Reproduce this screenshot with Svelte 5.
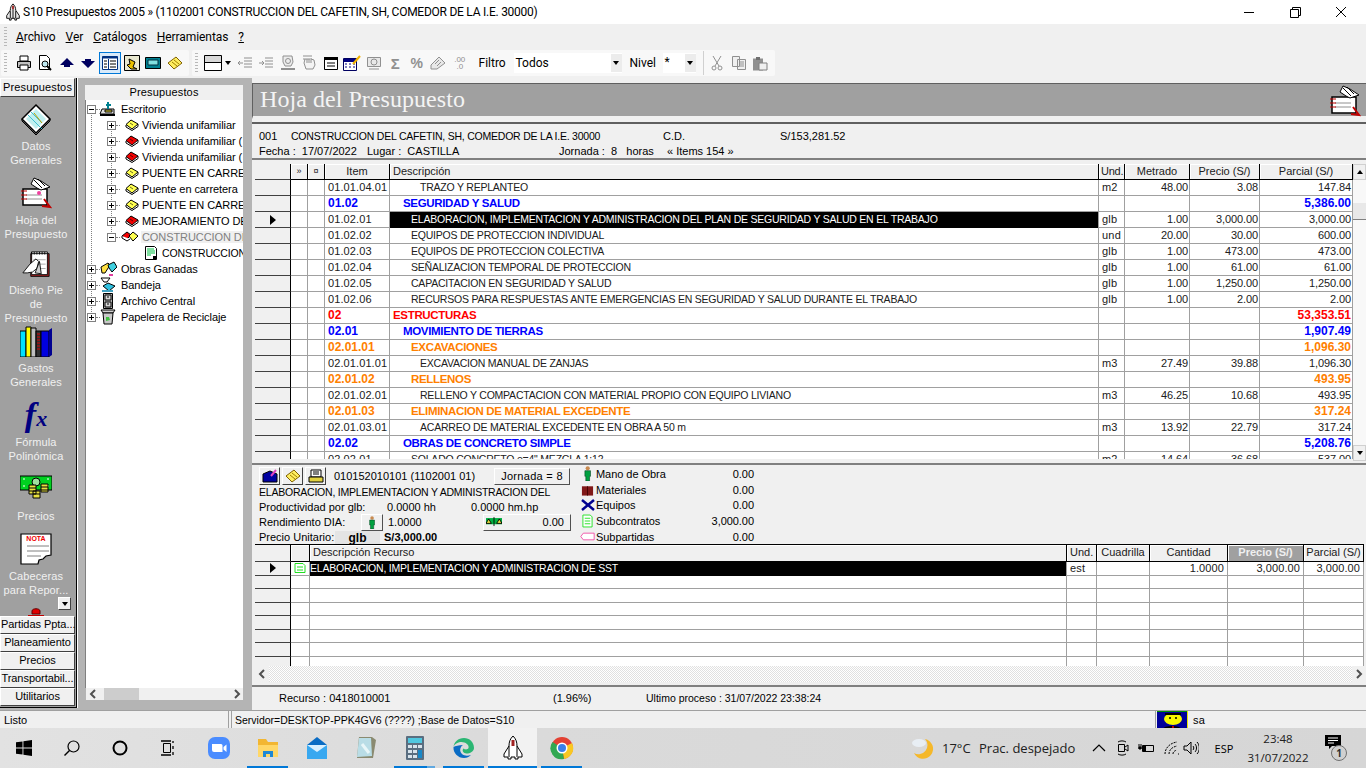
<script>
  const menus = ["Archivo", "Ver", "Catálogos", "Herramientas", "?"];

  const treeBooks = [
    { color: "yellow", text: "Vivienda unifamiliar" },
    { color: "red", text: "Vivienda unifamiliar (" },
    { color: "red", text: "Vivienda unifamiliar (" },
    { color: "yellow", text: "PUENTE EN CARRETERA" },
    { color: "yellow", text: "Puente en carretera" },
    { color: "yellow", text: "PUENTE EN CARRETERA" },
    { color: "red", text: "MEJORAMIENTO DE LA" },
  ];

  const rows = [
    { item: "01.01.04.01", desc: "TRAZO Y REPLANTEO", ind: 4, und: "m2", met: "48.00", pre: "3.08", par: "147.84" },
    { item: "01.02", desc: "SEGURIDAD Y SALUD", ind: 2, kind: "blue", par: "5,386.00" },
    { item: "01.02.01", desc: "ELABORACION, IMPLEMENTACION Y ADMINISTRACION DEL PLAN DE SEGURIDAD Y SALUD EN EL TRABAJO", ind: 3, und: "glb", met: "1.00", pre: "3,000.00", par: "3,000.00", sel: true },
    { item: "01.02.02", desc: "EQUIPOS DE PROTECCION INDIVIDUAL", ind: 3, und: "und", met: "20.00", pre: "30.00", par: "600.00" },
    { item: "01.02.03", desc: "EQUIPOS DE PROTECCION COLECTIVA", ind: 3, und: "glb", met: "1.00", pre: "473.00", par: "473.00" },
    { item: "01.02.04", desc: "SEÑALIZACION TEMPORAL DE PROTECCION", ind: 3, und: "glb", met: "1.00", pre: "61.00", par: "61.00" },
    { item: "01.02.05", desc: "CAPACITACION EN SEGURIDAD Y SALUD", ind: 3, und: "glb", met: "1.00", pre: "1,250.00", par: "1,250.00" },
    { item: "01.02.06", desc: "RECURSOS PARA RESPUESTAS ANTE EMERGENCIAS EN SEGURIDAD Y SALUD DURANTE EL TRABAJO", ind: 3, und: "glb", met: "1.00", pre: "2.00", par: "2.00" },
    { item: "02", desc: "ESTRUCTURAS", ind: 1, kind: "red", par: "53,353.51" },
    { item: "02.01", desc: "MOVIMIENTO DE TIERRAS", ind: 2, kind: "blue", par: "1,907.49" },
    { item: "02.01.01", desc: "EXCAVACIONES", ind: 3, kind: "orange", par: "1,096.30" },
    { item: "02.01.01.01", desc: "EXCAVACION MANUAL DE ZANJAS", ind: 4, und: "m3", met: "27.49", pre: "39.88", par: "1,096.30" },
    { item: "02.01.02", desc: "RELLENOS", ind: 3, kind: "orange", par: "493.95" },
    { item: "02.01.02.01", desc: "RELLENO Y COMPACTACION CON MATERIAL PROPIO CON EQUIPO LIVIANO", ind: 4, und: "m3", met: "46.25", pre: "10.68", par: "493.95" },
    { item: "02.01.03", desc: "ELIMINACION DE MATERIAL EXCEDENTE", ind: 3, kind: "orange", par: "317.24" },
    { item: "02.01.03.01", desc: "ACARREO DE MATERIAL EXCEDENTE EN OBRA A 50 m", ind: 4, und: "m3", met: "13.92", pre: "22.79", par: "317.24" },
    { item: "02.02", desc: "OBRAS DE CONCRETO SIMPLE", ind: 2, kind: "blue", par: "5,208.76" },
    { item: "02.02.01", desc: "SOLADO CONCRETO e=4\" MEZCLA 1:12", ind: 3, und: "m2", met: "14.64", pre: "36.68", par: "537.00" },
  ];

  const indents = { 1: 3, 2: 13, 3: 21, 4: 30 };

  const totals = [
    { label: "Mano de Obra", value: "0.00", icon: "man" },
    { label: "Materiales", value: "0.00", icon: "mat" },
    { label: "Equipos", value: "0.00", icon: "eq" },
    { label: "Subcontratos", value: "3,000.00", icon: "sub" },
    { label: "Subpartidas", value: "0.00", icon: "part" },
  ];

  const bottomTabs = ["Partidas Ppta...", "Planeamiento", "Precios", "Transportabil...", "Utilitarios"];
  const emptyRows = Array(7);
</script>

{#snippet book(color)}
  <svg class="book" viewBox="0 0 14 12" width="14" height="12">
    <path d="M1 6v2l6 3.500 6-4V5" fill="#fff" stroke="#000" />
    <path d="M1 5.500 6 1l7 4-6 5z" fill={color === "red" ? "#f00000" : "#ffff50"} stroke="#000" />
    <path d="M5 4l3 2" stroke="#000" stroke-width=".6" />
  </svg>
{/snippet}

{#snippet expander(minus)}
  <span class="exp">
    <span class="exp-h"></span>
    {#if !minus}<span class="exp-v"></span>{/if}
  </span>
{/snippet}

{#snippet tinyman(size)}
  <svg viewBox="0 0 10 16" width={size * 0.625} height={size}>
    <circle cx="5" cy="2.5" r="2.2" fill="#c98a50" />
    <path d="M2 5h6v6H7v5H3v-5H2z" fill="#00a040" stroke="#004020" stroke-width=".6" />
  </svg>
{/snippet}

{#snippet chevron(right)}
  <svg viewBox="0 0 8 10" width="8" height="10">
    <path d={right ? "M2 1l4 4-4 4" : "M6 1 2 5l4 4"} fill="none" stroke="#505050" stroke-width="2" />
  </svg>
{/snippet}

<div class="window">
  <header class="titlebar">
    <svg class="shuttle" viewBox="0 0 20 20" width="18" height="18">
      <path d="M10 1c2 2 3 4 3 7l4 6v3h-3v2h-2v-2H8v2H6v-2H3v-3l4-6c0-3 1-5 3-7z" fill="#e8e8e8" stroke="#000" />
      <path d="M9 3h2v4H9z" fill="#a02020" />
      <path d="M7 9v8M13 9v8M10 7v10" stroke="#000" />
    </svg>
    <span class="title-text">S10 Presupuestos 2005 » (1102001 CONSTRUCCION DEL CAFETIN, SH, COMEDOR DE LA I.E. 30000)</span>
    <div class="winctl">
      <svg viewBox="0 0 46 24" width="46" height="24"><path d="M18 12.5h10" stroke="#000" /></svg>
      <svg viewBox="0 0 46 24" width="46" height="24"><path d="M18.5 9.5h8v8h-8zM20.5 9.5v-2h8v8h-2" fill="none" stroke="#000" /></svg>
      <svg viewBox="0 0 46 24" width="46" height="24"><path d="M18 7l10 10M28 7 18 17" stroke="#000" /></svg>
    </div>
  </header>

  <nav class="menubar">
    <span class="grip"></span>
    {#each menus as m}
      <span class="menu"><u>{m[0]}</u>{m.slice(1)}</span>
    {/each}
  </nav>

  <div class="toolbar">
    <div class="band band-a">
      <span class="grip"></span>
      <span class="tb">
        <svg viewBox="0 0 16 16" width="16" height="16"><path d="M4 1h8v5H4z" fill="#fff" stroke="#000" /><path d="M1.5 6.500h13v6h-13z" fill="#c0c0c0" stroke="#000" /><path d="M4 10h8v5H4z" fill="#fff" stroke="#000" /></svg>
      </span>
      <span class="tb">
        <svg viewBox="0 0 16 16" width="16" height="16"><path d="M2.500 .5h7l3 3v11h-10z" fill="#fff" stroke="#000" /><circle cx="8" cy="9" r="3" fill="#bfe8f0" stroke="#000" /><path d="M10 11l4 4" stroke="#000" stroke-width="2" /></svg>
      </span>
      <span class="tb"><svg viewBox="0 0 14 10" width="14" height="10"><path d="M7 0l7 7H10v2H4V7H0z" fill="#000060" /></svg></span>
      <span class="tb"><svg viewBox="0 0 14 10" width="14" height="10"><path d="M7 10 0 3h4V1h6v2h4z" fill="#000060" /></svg></span>
      <span class="tb tb-on">
        <svg viewBox="0 0 16 14" width="16" height="14"><path d="M.5.500h15v13H.5z" fill="#fff" stroke="#003080" /><path d="M.5 .5h15v2H.5z" fill="#003080" /><path d="M6.500 3v10" stroke="#003080" /><path d="M2 5h3M2 8h3M2 11h3M8 5h6M8 8h6M8 11h6" stroke="#000" /></svg>
      </span>
      <span class="tb">
        <svg viewBox="0 0 16 16" width="16" height="16"><path d="M.5.500h15v15H.5z" fill="#e8e8d0" stroke="#000" /><path d="M5 4l6 3-2 5 4 2-6 0-4-4 3-1z" fill="#e8c000" stroke="#000" /></svg>
      </span>
      <span class="tb">
        <svg viewBox="0 0 16 14" width="16" height="14"><path d="M.5 1.500h15v11H.5z" fill="#008090" stroke="#000" /><path d="M3 4h10v5H3z" fill="#80e0e0" stroke="#003040" /></svg>
      </span>
      <span class="tb">
        <svg viewBox="0 0 16 14" width="16" height="14"><path d="M1 7l8-6 6 6-8 6z" fill="#ffee60" stroke="#806000" /><path d="M5 6l5 4M7 4l5 4" stroke="#a08000" /></svg>
      </span>
    </div>
    <div class="band band-b">
      <span class="grip"></span>
      <span class="tb tb-wide">
        <svg viewBox="0 0 18 16" width="18" height="16"><path d="M.5.500h17v15H.5z" fill="#fff" stroke="#000" /><path d="M1 1h16v6H1z" fill="#d8d8d8" /><path d="M.5 7.500h17" stroke="#000" /></svg>
        <i class="caret"></i>
      </span>
      <div class="tb-group">
        <span class="tb dim">
          <svg viewBox="0 0 16 14" width="16" height="14"><path d="M7 2h8M7 5h8M7 8h8M7 11h8M1 7h5M3 5 1 7l2 2" stroke="#909090" fill="none" /></svg>
        </span>
        <span class="tb dim">
          <svg viewBox="0 0 16 14" width="16" height="14"><path d="M7 2h8M7 5h8M7 8h8M7 11h8M1 7h5M4 5l2 2-2 2" stroke="#909090" fill="none" /></svg>
        </span>
        <span class="tb dim">
          <svg viewBox="0 0 16 16" width="16" height="16"><path d="M3 1h9l1 6-2 4H5L3 7z" fill="#ececec" stroke="#909090" /><circle cx="8" cy="6" r="2.500" fill="none" stroke="#909090" /><path d="M1 14h14" stroke="#909090" stroke-width="2" /></svg>
        </span>
        <span class="tb dim">
          <svg viewBox="0 0 16 16" width="16" height="16"><path d="M2 4h9M2 1h9M4 4l-1 4 2 6h7l2-4-1-5-3-1" fill="#f4f4f4" stroke="#909090" /><path d="M6 4v4M8 4v4M10 5v3" stroke="#909090" /></svg>
        </span>
        <span class="tb">
          <svg viewBox="0 0 16 14" width="16" height="14"><path d="M1.500 1.500h13v12h-13z" fill="#fff" stroke="#000" /><path d="M1 1h14v3H1z" fill="#000" /><path d="M4 7h8M4 10h8" stroke="#000" /></svg>
        </span>
        <span class="tb">
          <svg viewBox="0 0 18 16" width="18" height="16"><path d="M.5 3.500h13v12H.5z" fill="#fff" stroke="#000060" /><path d="M1 4h12v3H1z" fill="#000080" /><path d="M2 9h2M6 9h2M10 9h2M2 12h2M6 12h2M10 12h2" stroke="#000080" /><path d="M10 9l7-8" stroke="#f0b000" stroke-width="2" /></svg>
        </span>
        <span class="tb dim">
          <svg viewBox="0 0 16 14" width="16" height="14"><path d="M1.500 1.500h13v9h-13z" fill="#e8e8e8" stroke="#909090" /><circle cx="8" cy="6" r="3" fill="none" stroke="#909090" /><path d="M3 13h10" stroke="#909090" /></svg>
        </span>
        <span class="tb dim"><span class="dim-glyph sigma">Σ</span></span>
        <span class="tb dim"><span class="dim-glyph">%</span></span>
        <span class="tb dim">
          <svg viewBox="0 0 16 14" width="16" height="14"><path d="M1 9l8-8 6 6-8 6H1z" fill="#e8e8e8" stroke="#909090" /><path d="M5 8l4-4M7 10l4-4" stroke="#909090" /></svg>
        </span>
        <span class="tb dim dots">.00<br />.0</span>
      </div>
      <span class="tool-label filtro">Filtro</span>
      <span class="combo combo-filtro">Todos<i class="combo-arrow"><i class="caret"></i></i></span>
      <span class="tool-label nivel">Nivel</span>
      <span class="combo combo-nivel">*<i class="combo-arrow"><i class="caret"></i></i></span>
      <span class="sep"></span>
      <span class="tb dim">
        <svg viewBox="0 0 12 16" width="12" height="16"><path d="M2 1l6 10M10 1 4 11" stroke="#909090" fill="none" /><circle cx="3" cy="13" r="2" fill="none" stroke="#909090" /><circle cx="9" cy="13" r="2" fill="none" stroke="#909090" /></svg>
      </span>
      <span class="tb dim">
        <svg viewBox="0 0 16 14" width="16" height="14"><path d="M1.500.500h7v10h-7zM6.500 3.500h8v10h-8z" fill="#f0f0f0" stroke="#909090" /><path d="M9 6h4M9 8h4M9 10h4" stroke="#909090" /></svg>
      </span>
      <span class="tb dim">
        <svg viewBox="0 0 16 15" width="16" height="15"><path d="M1 2.500h10v12H1z" fill="#909090" /><path d="M4 1h4v3H4z" fill="#707070" /><path d="M7 7h8v7H7z" fill="#f0f0f0" stroke="#808080" /></svg>
      </span>
    </div>
  </div>

  <main class="main">
    <aside class="sidebar">
      <div class="side-tab">Presupuestos</div>
      <div class="side-list">
        <div class="side-item">
          <svg viewBox="0 0 32 32" width="32" height="32"><path d="M2 16 16 2l14 14-14 14z" fill="#fff" stroke="#000" stroke-width="1.500" /><path d="M6 16 16 6l10 10-10 10z" fill="#c0f0f0" /><path d="M8 12l14 14M11 9l11 11" stroke="#40c0d0" /><path d="M14 10l8 10" stroke="#c0a000" /><path d="M30 16v2L16 32 2 18v-2" fill="none" stroke="#000" /></svg>
          <span class="side-label">Datos<br />Generales</span>
        </div>
        <div class="side-item">
          <svg viewBox="0 0 32 32" width="32" height="32"><path d="M3 12h24v16H3z" fill="#fff" stroke="#000" stroke-width="1.500" /><path d="M6 18h16M6 22h16" stroke="#909090" /><path d="M1 14h6M1 18h6M1 22h6" stroke="#c00000" /><path d="M14 1l7 3 9 6-9 3-4-2-6-4z" fill="#fff" stroke="#000" /><path d="M14 3l8 8M18 2l7 7" stroke="#000" /><path d="M24 22l6 8-8-1" fill="none" stroke="#c00000" stroke-width="2" /><circle cx="19" cy="16" r="2" fill="#f040a0" /></svg>
          <span class="side-label">Hoja del<br />Presupuesto</span>
        </div>
        <div class="side-item">
          <svg viewBox="0 0 32 32" width="32" height="32"><path d="M10 3h21v26H10z" fill="#a02020" stroke="#000" /><path d="M11 1h18v26H11z" fill="#fff" stroke="#000" /><path d="M11 3h18M11 1v3M14 1v3M17 1v3M20 1v3M23 1v3M26 1v3" stroke="#000" /><path d="M13 10h14M13 15h14M13 20h14" stroke="#a0a0a0" /><path d="M1 25l8-10 7-6 3 3-2 8-5 4-6 1z" fill="#fff" stroke="#000" /><path d="M20 12l2 14-7-1z" fill="#d0d0d0" stroke="#000" /></svg>
          <span class="side-label">Diseño Pie<br />de<br />Presupuesto</span>
        </div>
        <div class="side-item">
          <svg viewBox="0 0 32 32" width="32" height="32"><path d="M0 6h6v26H0z" fill="#00e0ff" stroke="#000" /><path d="M6 2h5v30H6z" fill="#ffff00" stroke="#000" /><path d="M11 3h5v29h-5z" fill="#c0c0c0" stroke="#000" /><path d="M16 6h5v26h-5z" fill="#303030" stroke="#000" /><path d="M17 9h3M17 12h3M17 15h3M17 18h3M17 21h3M17 24h3" stroke="#e00000" /><path d="M21 6h8v26h-8z" fill="#0000e0" stroke="#000" /><path d="M29 5l3-2v27l-3 2z" fill="#000090" /></svg>
          <span class="side-label">Gastos<br />Generales</span>
        </div>
        <div class="side-item">
          <span class="fx"><b>f</b><b class="fx-x">x</b></span>
          <span class="side-label">Fórmula<br />Polinómica</span>
        </div>
        <div class="side-item short">
          <svg viewBox="0 0 32 32" width="32" height="32"><path d="M0 3h32v14H0z" fill="#00d020" stroke="#000" /><circle cx="16" cy="9" r="4" fill="#a0e0a0" stroke="#000" /><path d="M3 6h2M27 6h2M3 13h2M27 13h2" stroke="#fff" /><path d="M9 12h7v9H9zM21 11h7v8h-7zM13 18h7v7h-7z" fill="#e8e040" stroke="#000" /><path d="M9 15h7M9 18h7M21 14h7M21 17h7M13 21h7" stroke="#000" /></svg>
          <span class="side-label">Precios</span>
        </div>
        <div class="side-item">
          <svg viewBox="0 0 32 32" width="32" height="32"><path d="M1 1h30v21l-5 1-3 3-4 1-1 4H1z" fill="#fff" stroke="#000" stroke-width="1.200" /><text class="nota" x="16" y="8" text-anchor="middle">NOTA</text><path d="M7 13h22M7 18h22M7 23h14" stroke="#808080" /></svg>
          <span class="side-label">Cabeceras<br />para Repor...</span>
        </div>
        <div class="side-item">
          <svg viewBox="0 0 32 32" width="32" height="32"><path d="M12 4c0-3 8-3 8 0v3h-8z" fill="#e00000" stroke="#600000" /><path d="M8 8h16v3H8z" fill="#c00000" /></svg>
        </div>
      </div>
      <span class="side-more"><i class="caret"></i></span>
      <div class="side-tabs">
        {#each bottomTabs as t}
          <div class="side-tab2">{t}</div>
        {/each}
      </div>
    </aside>

    <section class="tree-pane">
      <div class="tree-head">Presupuestos</div>
      <div class="tree-body">
        <div class="tree-row">
          {@render expander(true)}
          <svg class="ti" viewBox="0 0 18 16" width="18" height="16"><path d="M3 8h12v5H1z" fill="#e0e0e0" stroke="#000" /><path d="M6 9h7v2H6z" fill="#f0e040" stroke="#000" /><path d="M9 1v7M7 4h5" stroke="#008090" stroke-width="2" /><path d="M1 13h15v2H1z" fill="#000" /></svg>
          <span class="tt">Escritorio</span>
        </div>
        {#each treeBooks as b}
          <div class="tree-row lvl1">
            {@render expander(false)}
            {@render book(b.color)}
            <span class="tt">{b.text}</span>
          </div>
        {/each}
        <div class="tree-row lvl1">
          {@render expander(true)}
          <svg class="book open" viewBox="0 0 18 12" width="18" height="12"><path d="M1 5l5-4 4 3-4 4z" fill="#f00000" stroke="#000" /><path d="M8 5l4-4 5 4-5 5z" fill="#ffff50" stroke="#000" /><path d="M1 5v2l5 3 3-2" fill="#fff" stroke="#000" /></svg>
          <span class="tt tt-sel">CONSTRUCCION DEL CAFETIN</span>
        </div>
        <div class="tree-row lvl2">
          <svg class="leaf" viewBox="0 0 12 14" width="12" height="14"><path d="M.5.500h9l2 2v11H.5z" fill="#fff" stroke="#000" /><path d="M2 3h7M2 5h8M2 7h8M2 9h4" stroke="#00c040" /><path d="M8 10h3v3H8z" fill="#000" /></svg>
          <span class="tt">CONSTRUCCION DEL CAFETIN</span>
        </div>
        <div class="tree-row">
          {@render expander(false)}
          <svg class="ti" viewBox="0 0 18 16" width="18" height="16"><path d="M2 6l7-4 2 2-5 8H3z" fill="#ffe040" stroke="#000" /><path d="M9 4l6-3 3 5-5 5-3-4z" fill="#40d0e0" stroke="#000" /><path d="M10 13h4v2h-4z" fill="#e040a0" /></svg>
          <span class="tt">Obras Ganadas</span>
        </div>
        <div class="tree-row">
          {@render expander(false)}
          <svg class="ti" viewBox="0 0 18 16" width="18" height="16"><path d="M2 1h9l-3 4H5z" fill="#fff" stroke="#000" /><path d="M4 9l5-3 7 3-6 5z" fill="#30c0e0" stroke="#000" /><path d="M3 13h11v2H3z" fill="#40a0c0" /></svg>
          <span class="tt">Bandeja</span>
        </div>
        <div class="tree-row">
          {@render expander(false)}
          <svg class="ti" viewBox="0 0 18 16" width="18" height="16"><path d="M4.500.500h9v15h-9z" fill="#b0b0b0" stroke="#000" /><path d="M6 2h6v5H6zM6 9h6v5H6z" fill="#d8d8d8" stroke="#000" /><path d="M8 4h2M8 11h2" stroke="#000" /></svg>
          <span class="tt">Archivo Central</span>
        </div>
        <div class="tree-row">
          {@render expander(false)}
          <svg class="ti" viewBox="0 0 18 16" width="18" height="16"><path d="M2 1h14l-2 3H4z" fill="#d0d0d0" stroke="#000" /><path d="M4 4h10l-1 11H5z" fill="#c8c8c8" stroke="#000" /><path d="M7 8l3 0 1 3-4 1z" fill="#40c040" /></svg>
          <span class="tt">Papelera de Reciclaje</span>
        </div>
      </div>
      <div class="hscroll tree-scroll">
        <span class="arr">{@render chevron(false)}</span>
        <span class="thumb-h"></span>
        <span class="arr right">{@render chevron(true)}</span>
      </div>
    </section>

    <section class="content">
      <div class="title-band">
        <h1>Hoja del Presupuesto</h1>
        <svg class="title-icon" viewBox="0 0 32 32" width="32" height="32"><path d="M3 12h24v16H3z" fill="#fff" stroke="#000" stroke-width="1.500" /><path d="M6 18h16M6 22h16" stroke="#909090" /><path d="M1 14h6M1 18h6M1 22h6" stroke="#c00000" /><path d="M14 1l7 3 9 6-9 3-4-2-6-4z" fill="#fff" stroke="#000" /><path d="M14 3l8 8M18 2l7 7" stroke="#000" /><path d="M24 22l6 8-8-1" fill="none" stroke="#c00000" stroke-width="2" /></svg>
      </div>

      <div class="info">
        <div class="info-row">
          <span class="i-code">001</span>
          <span class="i-name caps">CONSTRUCCION DEL CAFETIN, SH, COMEDOR DE LA I.E. 30000</span>
          <span class="i-cd">C.D.</span>
          <span>S/153,281.52</span>
        </div>
        <div class="info-row">
          <span class="i-fecha">Fecha :  17/07/2022</span>
          <span class="i-lugar">Lugar :  CASTILLA</span>
          <span class="i-jor">Jornada :  8   horas</span>
          <span>« Items 154 »</span>
        </div>
      </div>

      <div class="grid-wrap">
        <div class="grid">
          <div class="g-row g-head">
            <div class="rh"></div>
            <div class="hc small">»</div>
            <div class="hc small">¤</div>
            <div class="hc">Item</div>
            <div class="hc left">Descripción</div>
            <div class="hc left tight">Und.</div>
            <div class="hc">Metrado</div>
            <div class="hc">Precio (S/)</div>
            <div class="hc">Parcial (S/)</div>
          </div>
          {#each rows as r}
            <div class="g-row {r.kind || ''}">
              <div class="rh">{#if r.sel}<i class="ptr"></i>{/if}</div>
              <div class="c"></div>
              <div class="c"></div>
              <div class="c item">{r.item}</div>
              <div class="c desc caps" class:sel={r.sel}><span style="padding-left: {indents[r.ind]}px">{r.desc}</span></div>
              <div class="c und">{r.und || ""}</div>
              <div class="c num">{r.met || ""}</div>
              <div class="c num">{r.pre || ""}</div>
              <div class="c num">{r.par}</div>
            </div>
          {/each}
        </div>
        <div class="vscroll">
          <span class="v-btn"><i class="up"></i></span>
          <span class="v-track"><span class="v-thumb"></span></span>
          <span class="v-btn"><i class="caret"></i></span>
        </div>
      </div>

      <div class="splitter"></div>

      <div class="detail">
        <div class="d-left">
          <div class="d-top">
            <span class="d-btn">
              <svg viewBox="0 0 16 14" width="16" height="14"><path d="M1 5l7-3 7 3v8H1z" fill="#0000a0" stroke="#000" /><path d="M9 7l5-6" stroke="#e040c0" stroke-width="2" /></svg>
            </span>
            <span class="d-btn">
              <svg viewBox="0 0 16 14" width="16" height="14"><path d="M1 7l8-6 6 6-8 6z" fill="#ffee60" stroke="#806000" /><path d="M5 6l5 4M7 4l5 4" stroke="#a08000" /></svg>
            </span>
            <span class="d-btn">
              <svg viewBox="0 0 16 14" width="16" height="14"><path d="M3 1h10v7H3z" fill="#fff" stroke="#000" /><path d="M5 3h6M5 5h6" stroke="#000" /><path d="M1 8h14v5H1z" fill="#e0d040" stroke="#000" /></svg>
            </span>
            <span class="d-code">010152010101 (1102001 01)</span>
            <span class="jornada">Jornada = 8</span>
          </div>
          <div class="d-line caps">ELABORACION, IMPLEMENTACION Y ADMINISTRACION DEL</div>
          <div class="d-line d-prod">
            <span class="w-prod">Productividad por glb:</span>
            <span class="w-hh">0.0000 hh</span>
            <span>0.0000 hm.hp</span>
          </div>
          <div class="d-line d-rend">
            <span class="w-rend">Rendimiento DIA:</span>
            <span class="small-btn">{@render tinyman(13)}</span>
            <span class="w-val">1.0000</span>
            <span class="price-btn">
              <svg viewBox="0 0 18 12" width="16" height="11"><path d="M0 1h18v7H0z" fill="#00b040" /><path d="M9 0v10M3 2l-3 5h6zM15 2l-3 5h6z" fill="#e8e040" stroke="#000" /></svg>
              <span>0.00</span>
            </span>
          </div>
          <div class="d-line d-pu">
            <span class="w-pu">Precio Unitario:</span>
            <span class="pu-und">glb</span>
            <b>S/3,000.00</b>
          </div>
        </div>

        <div class="d-right">
          {#each totals as t}
            <div class="t-row">
              <span class="t-icon">
                {#if t.icon === "man"}
                  {@render tinyman(15)}
                {:else if t.icon === "mat"}
                  <svg viewBox="0 0 14 12" width="13" height="12"><path d="M1 2h12v10H1z" fill="#801818" /><path d="M7 2v10" stroke="#400" /></svg>
                {:else if t.icon === "eq"}
                  <svg viewBox="0 0 14 12" width="14" height="12"><path d="M1 1l12 10M13 1 1 11" stroke="#000090" stroke-width="2.500" /></svg>
                {:else if t.icon === "sub"}
                  <svg viewBox="0 0 12 14" width="11" height="14"><path d="M1 .500h8l2 2v11H1z" fill="#fff" stroke="#20e020" /><path d="M3 4h6M3 7h6M3 10h6" stroke="#20e020" /></svg>
                {:else}
                  <svg viewBox="0 0 18 12" width="17" height="11"><path d="M1 6l3-4h13v8H4z" fill="#fff" stroke="#f040a0" /></svg>
                {/if}
              </span>
              <span class="t-label">{t.label}</span>
              <span class="t-val">{t.value}</span>
            </div>
          {/each}
        </div>
      </div>

      <div class="lower">
        <div class="l-row l-head">
          <div class="rh"></div>
          <div class="hc"></div>
          <div class="hc left">Descripción Recurso</div>
          <div class="hc left">Und.</div>
          <div class="hc">Cuadrilla</div>
          <div class="hc">Cantidad</div>
          <div class="hc active">Precio (S/)</div>
          <div class="hc">Parcial (S/)</div>
        </div>
        <div class="l-row l-first">
          <div class="rh"><i class="ptr"></i></div>
          <div class="c icon-c">
            <svg viewBox="0 0 12 10" width="12" height="10"><path d="M1 .500h8l2 2v7H1z" fill="#fff" stroke="#20e020" /><path d="M3 4h6M3 7h6" stroke="#20e020" /></svg>
          </div>
          <div class="c desc caps sel">ELABORACION, IMPLEMENTACION Y ADMINISTRACION DE SST</div>
          <div class="c und">est</div>
          <div class="c"></div>
          <div class="c num">1.0000</div>
          <div class="c num">3,000.00</div>
          <div class="c num">3,000.00</div>
        </div>
        {#each emptyRows as _}
          <div class="l-row l-empty">
            <div class="rh"></div>
            <div class="c"></div>
            <div class="c"></div>
            <div class="c"></div>
            <div class="c"></div>
            <div class="c"></div>
            <div class="c"></div>
            <div class="c"></div>
          </div>
        {/each}
      </div>

      <div class="hscroll lower-scroll">
        <span class="arr">{@render chevron(false)}</span>
        <span class="track"></span>
        <span class="arr right">{@render chevron(true)}</span>
      </div>

      <footer class="content-foot">
        <span class="f-rec">Recurso : 0418010001</span>
        <span class="f-pct">(1.96%)</span>
        <span class="f-last">Ultimo proceso : 31/07/2022 23:38:24</span>
      </footer>
    </section>
  </main>

  <div class="status">
    <div class="st st-a">Listo</div>
    <div class="st st-b">Servidor=DESKTOP-PPK4GV6 (????) ;Base de Datos=S10</div>
    <div class="st st-c">
      <svg class="face" viewBox="0 0 31 18" width="31" height="18"><path d="M0 0h31v18H0z" fill="#00009a" /><path d="M0 0h31v1H0z" fill="#009000" /><path d="M30 0h1v18h-1z" fill="#e8e800" /><ellipse cx="16" cy="8" rx="9" ry="6" fill="#f8f800" /><path d="M8 4h16V2H8z" fill="#000" /><circle cx="13" cy="7" r="1" fill="#000" /><circle cx="19" cy="7" r="1" fill="#000" /><path d="M6 18c0-4 18-4 18 0z" fill="#000" /><path d="M15 15h2v3h-2z" fill="#c00000" /></svg>
      <span>sa</span>
    </div>
  </div>

  <footer class="taskbar">
    <div class="tk sys">
      <svg viewBox="0 0 16 16" width="16" height="16"><path d="M0 2.300 6.500 1.400V7.500H0zM7.400 1.200 16 0v7.500H7.400zM0 8.400h6.500v6.200L0 13.700zM7.400 8.400H16V16l-8.600-1.200z" fill="#000" /></svg>
    </div>
    <div class="tk sys">
      <svg viewBox="0 0 16 16" width="16" height="16"><circle cx="9.500" cy="6.500" r="5.500" fill="none" stroke="#000" stroke-width="1.200" /><path d="M5.500 10.500 .5 15.500" stroke="#000" stroke-width="1.400" /></svg>
    </div>
    <div class="tk sys">
      <svg viewBox="0 0 16 16" width="16" height="16"><circle cx="8" cy="8" r="6.500" fill="none" stroke="#000" stroke-width="2" /></svg>
    </div>
    <div class="tk sys">
      <svg viewBox="0 0 16 16" width="16" height="16"><path d="M3.500 3.500h7v9h-7z" fill="none" stroke="#000" /><path d="M1 1h10M1 15h10M13 1v2M13 6v3M13 12v3" stroke="#000" stroke-width="1.300" /></svg>
    </div>
    <div class="tk first">
      <svg viewBox="0 0 24 24" width="24" height="24"><rect x="1" y="1" width="22" height="22" rx="7" fill="#4a8cff" /><path d="M5 8h9a1.500 1.500 0 0 1 1.500 1.500V16H7a2 2 0 0 1-2-2zM16.500 11l3-2.500v7.500l-3-2.500z" fill="#fff" /></svg>
    </div>
    <div class="tk on">
      <svg viewBox="0 0 24 24" width="24" height="24"><path d="M2 3h8l2 3h10v15H2z" fill="#f2b632" /><path d="M2 9h20v12H2z" fill="#ffd767" /><path d="M7 15h10v6h-3v-3h-4v3H7z" fill="#1f88d4" /></svg>
    </div>
    <div class="tk">
      <svg viewBox="0 0 24 24" width="24" height="24"><path d="M2 9 12 1l10 8v14H2z" fill="#0a6cc4" /><path d="M2 9h20v14H2z" fill="#38a8f0" /><path d="M2 9l10 7 10-7" fill="#d9f0ff" /></svg>
    </div>
    <div class="tk">
      <svg viewBox="0 0 24 24" width="24" height="24"><path d="M5 1h13l4 3-3 18H3z" fill="#8a8a70" /><path d="M5 2h12l1 18-15 1z" fill="#b9dde6" /><path d="M8 8l7 9" stroke="#e8f6f8" stroke-width="3" /></svg>
    </div>
    <div class="tk on half">
      <svg viewBox="0 0 20 26" width="20" height="26"><rect x="1" y="1" width="18" height="24" rx="1" fill="#5a6e80" /><rect x="3" y="3" width="14" height="5" fill="#50c8e0" /><path d="M3 10h4v3H3zM8 10h4v3H8zM13 10h4v3h-4zM3 15h4v3H3zM8 15h4v3H8zM3 20h4v3H3zM8 20h4v3H8z" fill="#d8e4ec" /><path d="M13 15h4v8h-4z" fill="#1888c8" /></svg>
    </div>
    <div class="tk on">
      <svg viewBox="0 0 24 24" width="24" height="24"><path d="M22 12c0-6-4.500-10-10-10C6 2 2 6 1.500 11c1-3.500 5-5 8-5 4 0 8 3 7 6-1 2-4 1.500-5 .500-2 2 0 5 3 5 3.500 0 7.500-2 7.500-5.500z" fill="#2bb673" /><path d="M1.500 11C1 17 6 22 12 22c3 0 5-1 7-3-3 1-7 1-9-1-3-3-2-7 1-9-4 0-8 1-9.500 2z" fill="#0a6cc4" /></svg>
    </div>
    <div class="tk on active">
      <svg viewBox="0 0 20 26" width="20" height="26"><path d="M10 1c3 3 4 6 4 10l5 8v3h-4v2h-3v-2H8v2H5v-2H1v-3l5-8c0-4 1-7 4-10z" fill="#fff" stroke="#000" /><path d="M8.500 5h3v6h-3z" fill="#a02020" /><path d="M6 11v11M14 11v11" stroke="#000" /></svg>
    </div>
    <div class="tk on">
      <svg viewBox="0 0 24 24" width="24" height="24"><circle cx="12" cy="12" r="11" fill="#e34133" /><path d="M12 12 22 7a11 11 0 0 1-8 16z" fill="#f9c822" /><path d="M12 12 14 23A11 11 0 0 1 2.500 6z" fill="#32a852" /><circle cx="12" cy="12" r="5.500" fill="#fff" /><circle cx="12" cy="12" r="4" fill="#3a7fe8" /></svg>
    </div>

    <div class="tray">
      <svg class="weather" viewBox="0 0 24 24" width="24" height="24"><path d="M15 3a10 10 0 1 1-11 14 9 9 0 0 0 11-14z" fill="#f5b82a" /><ellipse cx="9" cy="7" rx="7" ry="4" fill="#e8eef4" /></svg>
      <span class="temp">17°C</span>
      <span class="wtext">Prac. despejado</span>
      <svg class="i-up" viewBox="0 0 14 8" width="14" height="8"><path d="M1 7l6-6 6 6" fill="none" stroke="#000" stroke-width="1.200" /></svg>
      <svg class="i-cam" viewBox="0 0 14 16" width="14" height="16"><path d="M2.500 4.500h6v7h-6zM9 7l3-2v6l-3-2M2 2c2-1.500 6-1.500 8 0M2 14c2 1.500 6 1.500 8 0" fill="none" stroke="#000" /></svg>
      <svg class="i-bat" viewBox="0 0 18 12" width="18" height="12"><path d="M5.500 3.500h11v6h-11z" fill="none" stroke="#000" /><path d="M6 4h3v5H6z" fill="#000" /><path d="M1 6h4M2 2v3M4 2v3M2 5h2v2H2z" stroke="#000" /></svg>
      <svg class="i-wifi" viewBox="0 0 16 14" width="16" height="14"><path d="M1 13c0-6 5-11 12-12M5 13c0-4 3-7 8-8M9 13c0-2 1-3 4-4" fill="none" stroke="#000" stroke-dasharray="2 1" /><path d="M14 13h1" stroke="#000" /></svg>
      <svg class="i-vol" viewBox="0 0 16 14" width="16" height="14"><path d="M1 5h3l4-4v12l-4-4H1zM10 5c1 1 1 3 0 4M12 3c2 2 2 6 0 8M14 1c3 3 3 9 0 12" fill="none" stroke="#000" /></svg>
      <span class="lang">ESP</span>
      <div class="clock">23:48<br />31/07/2022</div>
      <span class="notif">
        <svg viewBox="0 0 16 16" width="16" height="16"><path d="M0 0h16v11H7l-3 3v-3H0z" fill="#000" /><path d="M3 3h10M3 5.500h10M3 8h6" stroke="#fff" /></svg>
        <i class="badge">1</i>
      </span>
    </div>
  </footer>
</div>

<style>
  :global(body) {
    margin: 0;
    overflow: hidden;
  }

  .window {
    width: 1366px;
    height: 768px;
    display: flex;
    flex-direction: column;
    overflow: hidden;
    background: #f0f0f0;
    color: #000;
    font-family: "Liberation Sans", Arial, sans-serif;
    font-size: 11px;
  }

  .caps {
    font-size: 10.5px;
    letter-spacing: -0.22px;
  }

  /* barra de titulo */
  .titlebar {
    height: 24px;
    flex: none;
    background: #fff;
    display: flex;
    align-items: center;
    padding-left: 4px;
    font-family: Roboto, sans-serif;
    font-size: 12px;
  }

  .title-text {
    margin-left: 1px;
    white-space: nowrap;
    letter-spacing: -0.25px;
  }

  .winctl {
    margin-left: auto;
    padding-right: 2px;
    display: flex;
  }

  .menubar {
    height: 24px;
    flex: none;
    display: flex;
    align-items: center;
    padding: 2px 0 0 4px;
    box-sizing: border-box;
    font-family: Roboto, sans-serif;
    font-size: 12px;
    letter-spacing: -0.08px;
    gap: 10px;
  }

  .menubar .grip {
    margin-right: -1px;
  }

  .grip {
    width: 3px;
    height: 20px;
    flex: none;
    background: repeating-linear-gradient(#b8b8b8 0 1px, transparent 1px 3px);
  }

  .toolbar {
    height: 30px;
    flex: none;
    display: flex;
    padding-top: 2px;
    box-sizing: border-box;
    gap: 3px;
  }

  .band {
    height: 26px;
    background: #f8f8f8;
    border-radius: 2px;
    display: flex;
    align-items: center;
    padding-left: 3px;
    box-sizing: border-box;
  }

  .band-a {
    width: 188px;
    margin-left: 1px;
  }

  .band-b {
    width: 583px;
  }

  .band .grip {
    margin-right: 6px;
  }

  .tb {
    width: 21.5px;
    height: 22px;
    flex: none;
    display: flex;
    align-items: center;
    justify-content: center;
    box-sizing: border-box;
  }

  .tb-on {
    background: #d8eafa;
    border: 1px solid #0078d7;
    width: 22px;
  }

  .tb-wide {
    width: 30px;
    justify-content: flex-start;
    gap: 3px;
  }

  .tb-group {
    display: flex;
  }

  .dim-glyph {
    color: #909090;
    font-size: 14px;
    font-weight: bold;
  }

  .sigma {
    font-size: 15px;
  }

  .dots {
    color: #909090;
    font-size: 8px;
    line-height: 7px;
    text-align: center;
    display: block;
    padding-top: 4px;
  }

  .caret {
    display: block;
    width: 0;
    height: 0;
    border-left: 3.5px solid transparent;
    border-right: 3.5px solid transparent;
    border-top: 4px solid #000;
  }

  .tool-label {
    font-family: Roboto, sans-serif;
    font-size: 12px;
    flex: none;
  }

  .filtro {
    margin-left: 8px;
    width: 35px;
  }

  .nivel {
    margin-left: 8px;
    width: 33px;
  }

  .combo {
    height: 20px;
    flex: none;
    background: #fff;
    display: flex;
    align-items: center;
    justify-content: space-between;
    box-sizing: border-box;
    padding-left: 2px;
    font-family: Roboto, sans-serif;
    font-size: 12px;
  }

  .combo-filtro {
    width: 108px;
  }

  .combo-nivel {
    width: 33px;
    padding-bottom: 3px;
  }

  .combo-arrow {
    width: 11px;
    height: 18px;
    background: #ececec;
    display: flex;
    align-items: center;
    justify-content: center;
  }

  .combo-nivel .combo-arrow {
    margin-top: 3px;
  }

  .sep {
    width: 1px;
    height: 24px;
    flex: none;
    background: #d0d0d0;
    margin: 0 3px 0 7px;
  }

  /* panel principal */
  .main {
    flex: none;
    height: 632px;
    display: flex;
    background: #b4b4b4;
  }

  .sidebar {
    width: 76px;
    height: 629px;
    flex: none;
    position: relative;
    display: flex;
    flex-direction: column;
    background: #a0a0a0;
    border-right: 1px solid #000;
    border-bottom: 1px solid #000;
    box-shadow: 1px 0 #fff;
    overflow: hidden;
  }

  .side-tab,
  .side-tab2 {
    text-align: center;
    background: #f0f0f0;
    border: 1px solid;
    border-color: #fff #404040 #404040 #fff;
    box-sizing: border-box;
    width: 75px;
    white-space: nowrap;
    letter-spacing: -0.05px;
  }

  .side-tab {
    height: 19px;
    line-height: 16px;
    margin-bottom: 6px;
    flex: none;
    letter-spacing: 0.15px;
  }

  .side-list {
    flex: 1;
    min-height: 0;
    overflow: hidden;
  }

  .side-item {
    height: 74px;
    display: flex;
    flex-direction: column;
    align-items: center;
    padding-right: 4px;
    box-sizing: border-box;
  }

  .side-item.short {
    height: 60px;
  }

  .side-label {
    color: #f0f0f0;
    text-align: center;
    line-height: 14px;
    margin-top: 4px;
    letter-spacing: 0.1px;
  }

  .fx {
    height: 32px;
    font-family: "Liberation Serif", serif;
    font-style: italic;
    color: #000080;
    font-size: 34px;
    line-height: 32px;
    display: block;
  }

  .fx-x {
    font-size: 22px;
  }

  .nota {
    font-family: "Liberation Sans", sans-serif;
    font-size: 7px;
    font-weight: bold;
    fill: #f00000;
  }

  .side-more {
    position: absolute;
    left: 58px;
    top: 519px;
    width: 13px;
    height: 13px;
    background: #f0f0f0;
    border: 1px solid;
    border-color: #fff #404040 #404040 #fff;
    display: flex;
    align-items: center;
    justify-content: center;
    box-sizing: border-box;
  }

  .side-tabs {
    flex: none;
    height: 90px;
    margin-bottom: 1px;
  }

  .side-tab2 {
    height: 18px;
    line-height: 15px;
  }

  /* arbol */
  .tree-pane {
    width: 160px;
    height: 626px;
    flex: none;
    margin: 7px 6px 0 7px;
    display: flex;
    flex-direction: column;
  }

  .tree-head {
    height: 15px;
    margin-left: 1px;
    width: 158px;
    background: #f0f0f0;
    text-align: center;
    line-height: 15px;
    letter-spacing: 0.15px;
    flex: none;
  }

  .tree-body {
    height: 588px;
    flex: none;
    margin-left: 1px;
    width: 158px;
    background: #fff;
    border-left: 1px solid #808080;
    box-sizing: border-box;
    padding-top: 1px;
    overflow: hidden;
    position: relative;
  }

  /* lineas punteadas del arbol */
  .tree-body::before {
    content: "";
    position: absolute;
    left: 5px;
    top: 10px;
    height: 208px;
    border-left: 1px dotted #808080;
  }

  .tree-body::after {
    content: "";
    position: absolute;
    left: 25px;
    top: 22px;
    height: 112px;
    border-left: 1px dotted #808080;
  }

  .tree-row {
    height: 16px;
    display: flex;
    align-items: center;
    white-space: nowrap;
    padding-left: 1px;
    position: relative;
    z-index: 1;
  }

  .lvl1 {
    padding-left: 21px;
  }

  .lvl2 {
    padding-left: 59px;
  }

  .exp {
    width: 9px;
    height: 9px;
    flex: none;
    border: 1px solid #808080;
    background: #fff;
    box-sizing: border-box;
    position: relative;
    margin-right: 3px;
  }

  .exp::after {
    content: "";
    position: absolute;
    left: 8px;
    top: 3px;
    width: 4px;
    border-top: 1px dotted #808080;
  }

  .exp-h {
    position: absolute;
    left: 1px;
    top: 3px;
    width: 5px;
    height: 1px;
    background: #000;
  }

  .exp-v {
    position: absolute;
    left: 3px;
    top: 1px;
    width: 1px;
    height: 5px;
    background: #000;
  }

  .ti {
    margin-right: 3px;
    flex: none;
  }

  .book {
    margin: 0 2px 0 6px;
    flex: none;
  }

  .book.open {
    margin: 0 2px 0 2px;
  }

  .leaf {
    flex: none;
    margin-right: 4px;
  }

  .tt {
    padding-left: 1px;
    letter-spacing: -0.08px;
  }

  .lvl2 .tt {
    font-size: 10.5px;
    letter-spacing: -0.15px;
  }

  .tt-sel {
    background: #f0f0f0;
    color: #808080;
    flex: 1;
  }

  .hscroll {
    display: flex;
    align-items: center;
    background: #f0f0f0;
    box-sizing: border-box;
    flex: none;
  }

  .tree-scroll {
    height: 12px;
    margin-left: 2px;
    width: 157px;
  }

  .arr {
    width: 13px;
    display: flex;
    align-items: center;
    justify-content: center;
    flex: none;
  }

  .arr.right {
    margin-left: auto;
  }

  .thumb-h {
    margin-left: 5px;
    width: 35px;
    height: 12px;
    background: #cdcdcd;
  }

  .content {
    flex: 1;
    min-width: 0;
    display: flex;
    flex-direction: column;
    padding-top: 5px;
    background: #f0f0f0;
    box-shadow: inset 2px 0 #b4b4b4;
  }

  .title-band {
    height: 36px;
    margin-left: 2px;
    flex: none;
    background: #a0a0a0;
    border-top: 1px solid #606060;
    border-left: 1px solid #606060;
    border-bottom: 3px solid #f0f0f0;
    box-sizing: border-box;
    display: flex;
    align-items: center;
    justify-content: space-between;
    padding: 0 5px 2px 7px;
  }

  .title-band h1 {
    margin: 0;
    font-family: "Liberation Serif", serif;
    font-weight: normal;
    font-size: 24px;
    color: #f4f4f4;
    letter-spacing: 0.05px;
  }

  .title-icon {
    margin-top: 3px;
  }

  .info {
    height: 38px;
    flex: none;
    margin: 3px 0 0 2px;
    border-top: 2px solid #606060;
    border-bottom: 2px solid #808080;
    box-sizing: border-box;
    padding: 4px 7px 0;
  }

  .info-row {
    height: 15px;
    display: flex;
    align-items: center;
    white-space: pre;
  }

  .i-code {
    width: 32px;
  }

  .i-name {
    width: 372px;
  }

  .i-cd {
    width: 117px;
  }

  .i-fecha {
    width: 108px;
  }

  .i-lugar {
    width: 192px;
  }

  .i-jor {
    width: 108px;
  }

  .grid-wrap {
    height: 297px;
    flex: none;
    margin: 4px 0 0 5px;
    display: flex;
    overflow: hidden;
  }

  .grid {
    width: 1098px;
    height: 295px;
    flex: none;
    overflow: hidden;
  }

  .g-row {
    display: grid;
    grid-template-columns: 36px 17px 17px 65px 709px 26px 65px 70px 93px;
    height: 16px;
    box-sizing: border-box;
    border-bottom: 1px solid #a0a0a0;
    background: #fff;
  }

  .g-head {
    border-bottom: 1px solid #000;
    background: #f0f0f0;
  }

  .rh {
    background: #f0f0f0;
    border-right: 1px solid #000;
    border-bottom: 1px solid #404040;
    margin-bottom: -1px;
    display: flex;
    align-items: center;
    justify-content: center;
  }

  .ptr {
    width: 0;
    height: 0;
    border-top: 5px solid transparent;
    border-bottom: 5px solid transparent;
    border-left: 6px solid #000;
  }

  .hc {
    text-align: center;
    line-height: 15px;
    background: #f0f0f0;
    border-right: 1px solid #000;
    box-shadow: inset 1px 1px #fff;
    color: #202020;
    white-space: nowrap;
  }

  .hc.left {
    text-align: left;
    padding-left: 3px;
  }

  .hc.tight {
    padding-left: 2px;
    letter-spacing: -0.25px;
  }

  .hc.small {
    font-size: 9px;
  }

  .c {
    border-right: 1px solid #a0a0a0;
    line-height: 15px;
    white-space: nowrap;
    overflow: hidden;
    box-sizing: border-box;
  }

  .item {
    padding-left: 3px;
    letter-spacing: 0.1px;
    color: #202020;
  }

  .desc {
    color: #202020;
  }

  .desc span {
    display: inline-block;
  }

  .und {
    padding-left: 3px;
    color: #202020;
    letter-spacing: 0.2px;
  }

  .num {
    text-align: right;
    padding-right: 1px;
    color: #202020;
    letter-spacing: -0.1px;
  }

  .sel {
    background: #000;
    color: #fff;
    margin-bottom: -1px;
  }

  .blue .item,
  .blue .num,
  .red .item,
  .red .num,
  .orange .item,
  .orange .num {
    font-weight: bold;
    font-size: 12px;
    letter-spacing: 0;
  }

  .blue .desc,
  .red .desc,
  .orange .desc {
    font-weight: bold;
    font-size: 11.5px;
    letter-spacing: -0.33px;
  }

  .blue .c {
    color: #0000ff;
  }

  .red .c {
    color: #ff0000;
  }

  .orange .c {
    color: #ff8000;
  }

  .vscroll {
    width: 13px;
    flex: none;
    display: flex;
    flex-direction: column;
    background: #f0f0f0;
  }

  .v-btn {
    height: 16px;
    flex: none;
    display: flex;
    align-items: center;
    justify-content: center;
    background: #f0f0f0;
    border: 1px solid #d0d0d0;
    box-sizing: border-box;
  }

  .up {
    width: 0;
    height: 0;
    border-left: 3.5px solid transparent;
    border-right: 3.5px solid transparent;
    border-bottom: 4px solid #000;
  }

  .v-track {
    flex: 1;
    padding-top: 23px;
    background: #f8f8f8;
  }

  .v-thumb {
    display: block;
    height: 16px;
    background: #e8e8e8;
    border-bottom: 1px solid #808080;
  }

  .splitter {
    height: 4px;
    flex: none;
    margin-left: 2px;
    border-bottom: 2px solid #808080;
    box-sizing: border-box;
  }

  .detail {
    height: 79px;
    flex: none;
    display: flex;
    padding: 1px 0 0 9px;
    box-sizing: border-box;
  }

  .d-left {
    width: 321px;
    flex: none;
  }

  .d-top {
    height: 18px;
    display: flex;
    align-items: center;
    margin-top: 1px;
  }

  .d-btn {
    width: 21px;
    height: 18px;
    margin-right: 2px;
    display: flex;
    align-items: center;
    justify-content: center;
    box-sizing: border-box;
    border: 1px solid;
    border-color: #fff #404040 #404040 #fff;
  }

  .d-code {
    margin-left: 6px;
    width: 160px;
    white-space: nowrap;
  }

  .jornada {
    width: 76px;
    height: 17px;
    line-height: 15px;
    text-align: center;
    box-sizing: border-box;
    border: 1px solid;
    border-color: #fff #505050 #505050 #fff;
    letter-spacing: 0.3px;
  }

  .d-line {
    height: 15px;
    line-height: 15px;
    white-space: nowrap;
    display: flex;
    align-items: center;
  }

  .w-prod {
    width: 128px;
  }

  .w-hh {
    width: 84px;
  }

  .w-rend {
    width: 102px;
  }

  .w-val {
    margin-left: 5px;
    width: 95px;
  }

  .small-btn {
    width: 22px;
    height: 17px;
    box-sizing: border-box;
    border: 1px solid;
    border-color: #fff #505050 #505050 #fff;
    display: flex;
    align-items: center;
    justify-content: center;
  }

  .price-btn {
    width: 88px;
    height: 17px;
    box-sizing: border-box;
    border: 1px solid;
    border-color: #fff #505050 #505050 #fff;
    display: flex;
    align-items: center;
    justify-content: space-between;
    padding: 0 6px 0 2px;
  }

  .w-pu {
    width: 76px;
  }

  .pu-und {
    width: 45px;
    height: 14px;
    line-height: 15px;
    background: #e4e4e4;
    text-align: center;
    font-weight: bold;
    font-size: 12px;
    margin-right: 4px;
  }

  .d-right {
    width: 175px;
  }

  .t-row {
    height: 15.75px;
    display: flex;
    align-items: center;
    letter-spacing: -0.05px;
  }

  .t-icon {
    width: 15px;
    display: flex;
    justify-content: center;
    flex: none;
  }

  .t-label {
    width: 114px;
    padding-left: 1px;
  }

  .t-val {
    width: 44px;
    text-align: right;
  }

  .lower {
    height: 122px;
    flex: none;
    margin-left: 5px;
    width: 1109px;
    overflow: hidden;
    background: #fff;
  }

  .l-row {
    display: grid;
    grid-template-columns: 36px 19px 757px 30px 53px 78px 76px 60px;
    height: 13.5px;
    box-sizing: border-box;
    border-bottom: 1px solid #a0a0a0;
  }

  .l-row .num {
    padding-right: 3px;
    letter-spacing: 0.1px;
  }

  .l-head {
    height: 18px;
    border-bottom: 1px solid #000;
    border-top: 1px solid #000;
    background: #f0f0f0;
  }

  .l-first .c {
    line-height: 13px;
  }

  .hc.active {
    background: #a0a0a0;
    color: #f0f0f0;
    font-weight: bold;
  }

  .icon-c {
    display: flex;
    align-items: center;
    justify-content: center;
  }

  .lower-scroll {
    height: 16px;
    margin: 0 0 0 5px;
    background: repeating-conic-gradient(#e0e0e0 0 25%, #fff 0 50%) 0 0 / 2px 2px;
  }

  .lower-scroll .arr {
    background: #f0f0f0;
    width: 14px;
    height: 16px;
  }

  .track {
    flex: 1;
  }

  .content-foot {
    height: 26px;
    flex: none;
    margin: 3px 0 0 2px;
    border-top: 2px solid #808080;
    box-sizing: border-box;
    display: flex;
    align-items: center;
    padding: 0 0 2px 27px;
  }

  .f-rec {
    width: 274px;
  }

  .f-pct {
    width: 93px;
  }

  .f-last {
    font-size: 10.5px;
  }

  /* barra de estado */
  .status {
    height: 18px;
    flex: none;
    display: flex;
    background: #f0f0f0;
    border-top: 1px solid #a0a0a0;
    box-sizing: border-box;
  }

  .st {
    display: flex;
    align-items: center;
    height: 17px;
    white-space: nowrap;
  }

  .st-a {
    width: 229px;
    padding-left: 4px;
    box-sizing: border-box;
    border-right: 1px solid #a0a0a0;
  }

  .st-b {
    width: 925px;
    margin-left: 2px;
    padding-left: 3px;
    box-sizing: border-box;
    border-left: 1px solid #a0a0a0;
    border-right: 1px solid #a0a0a0;
    font-size: 10.5px;
  }

  .st-c {
    gap: 5px;
    margin-left: 1px;
    letter-spacing: 0.2px;
  }

  .face {
    flex: none;
  }

  /* barra de tareas */
  .taskbar {
    height: 40px;
    flex: none;
    display: flex;
    background: linear-gradient(90deg, #e2e2e2, #dadada 40%, #d6d6d6);
    font-family: "Open Sans", sans-serif;
    font-size: 12px;
  }

  .tk {
    width: 49px;
    flex: none;
    display: flex;
    align-items: center;
    justify-content: center;
    box-sizing: border-box;
    position: relative;
  }

  .tk.sys {
    width: 48px;
  }

  .tk.first {
    margin-left: 2px;
  }

  .tk.on::after {
    content: "";
    position: absolute;
    left: 4px;
    right: 4px;
    bottom: 0;
    height: 2px;
    background: #0078d7;
  }

  .tk.half::after {
    background: linear-gradient(90deg, #0078d7 80%, #60a8e0 80%);
  }

  .tk.active {
    background: #f2f2f2;
  }

  .tk.active::after {
    left: 0;
    right: 0;
  }

  .tray {
    margin-left: auto;
    display: flex;
    align-items: center;
    padding-right: 19px;
  }

  .temp {
    font-size: 13px;
    color: #202020;
    margin-left: 8px;
    width: 28px;
    white-space: nowrap;
  }

  .wtext {
    font-size: 13px;
    color: #202020;
    margin-left: 9px;
    width: 97px;
    white-space: nowrap;
  }

  .i-up {
    margin-left: 16px;
  }

  .i-cam {
    margin-left: 10px;
  }

  .i-bat {
    margin-left: 7px;
  }

  .i-wifi {
    margin-left: 9px;
  }

  .i-vol {
    margin-left: 3px;
  }

  .lang {
    margin-left: 9px;
    width: 32px;
    font-size: 11px;
    text-align: center;
  }

  .clock {
    width: 64px;
    text-align: center;
    line-height: 19px;
    margin: 0 9px 0 6px;
    font-size: 11.5px;
    color: #202020;
    white-space: nowrap;
  }

  .notif {
    position: relative;
    width: 28px;
    height: 26px;
    display: block;
    padding-left: 6px;
    box-sizing: border-box;
  }

  .badge {
    position: absolute;
    right: 0;
    bottom: 0;
    width: 14px;
    height: 14px;
    border: 1px solid #707070;
    border-radius: 50%;
    background: #d0d0d0;
    font-style: normal;
    font-weight: bold;
    font-size: 10px;
    line-height: 14px;
    text-align: center;
    color: #303030;
  }
</style>
